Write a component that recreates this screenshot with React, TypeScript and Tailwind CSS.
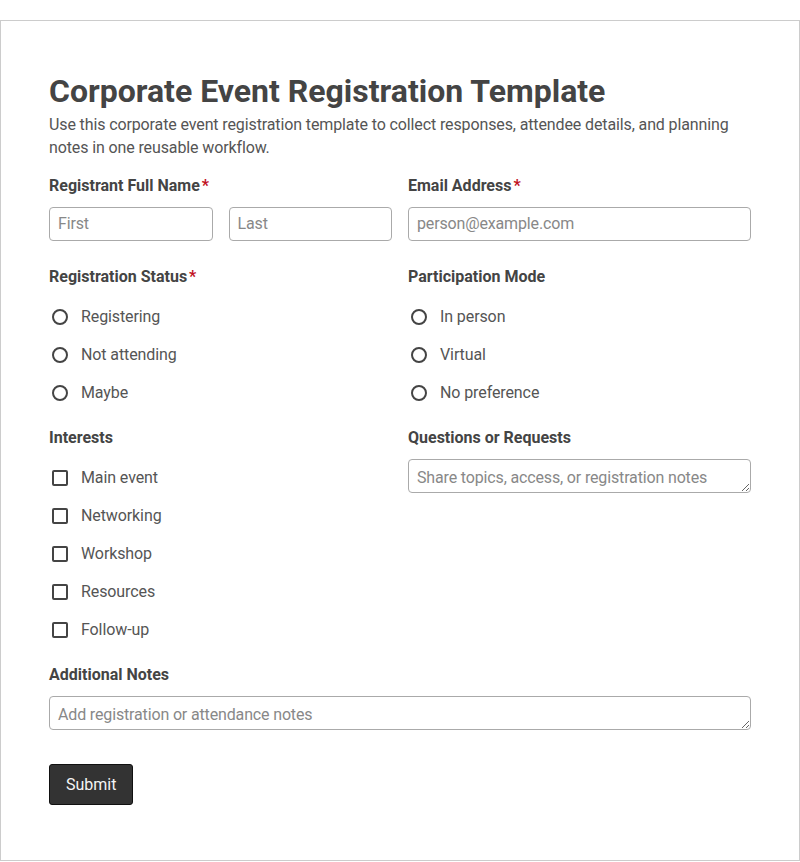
import React from "react";

const font = { fontFamily: "Roboto, 'Liberation Sans', sans-serif" };

function Label({ text, required }: { text: string; required?: boolean }) {
  return (
    <div className="h-6 text-[16px] leading-6 font-bold text-[#444]">
      {text}
      {required && <span className="ml-[2px] text-[#c1121f]">*</span>}
    </div>
  );
}

function Radio({ text }: { text: string }) {
  return (
    <label className="flex h-[38px] items-center">
      <span className="ml-[3px] h-4 w-4 shrink-0 rounded-full border-2 border-[#444]" />
      <span className="ml-[13px] text-[16px] tracking-[-0.1px] text-[#555]">{text}</span>
    </label>
  );
}

function Check({ text }: { text: string }) {
  return (
    <label className="flex h-[38px] items-center">
      <span className="ml-[3px] h-4 w-4 shrink-0 rounded-[2px] border-2 border-[#444]" />
      <span className="ml-[13px] text-[16px] tracking-[-0.1px] text-[#555]">{text}</span>
    </label>
  );
}

const inputCls =
  "block h-[34px] w-full rounded-[4px] border border-[#aaa] bg-white px-2 text-[16px] tracking-[-0.15px] text-[#444] placeholder:text-[#888] outline-none";

export default function App() {
  return (
    <div style={font} className="min-h-[862px] bg-white pt-[20px]">
      <div className="border border-[#ccc] px-12 pt-[51px] pb-[55px]">
        <h1 className="text-[32px] leading-[38px] font-bold text-[#444]">
          Corporate Event Registration Template
        </h1>
        <p className="mt-[3px] text-[16px] leading-[23px] tracking-[-0.12px] text-[#555]">
          Use this corporate event registration template to collect responses, attendee details, and planning
          notes in one reusable workflow.
        </p>

        <div className="mt-[15px] grid grid-cols-2 gap-x-4">
          <div>
            <Label text="Registrant Full Name" required />
            <div className="mt-[9px] grid grid-cols-2 gap-x-4">
              <input className={"pb-[2px] " + inputCls} placeholder="First" />
              <input className={"pb-[2px] " + inputCls} placeholder="Last" />
            </div>
          </div>
          <div>
            <Label text="Email Address" required />
            <input className={"mt-[9px] pb-[2px] " + inputCls} placeholder="person@example.com" />
          </div>
        </div>

        <div className="mt-[24px] grid grid-cols-2 gap-x-4">
          <div>
            <Label text="Registration Status" required />
            <div className="mt-[9px] flex flex-col">
              <Radio text="Registering" />
              <Radio text="Not attending" />
              <Radio text="Maybe" />
            </div>
          </div>
          <div>
            <Label text="Participation Mode" />
            <div className="mt-[9px] flex flex-col">
              <Radio text="In person" />
              <Radio text="Virtual" />
              <Radio text="No preference" />
            </div>
          </div>
        </div>

        <div className="mt-[14px] grid grid-cols-2 gap-x-4">
          <div>
            <Label text="Interests" />
            <div className="mt-[9px] flex flex-col">
              <Check text="Main event" />
              <Check text="Networking" />
              <Check text="Workshop" />
              <Check text="Resources" />
              <Check text="Follow-up" />
            </div>
          </div>
          <div>
            <Label text="Questions or Requests" />
            <textarea
              rows={1}
              className={"mt-[9px] pt-[8px] pb-[4px] leading-[20px] " + inputCls}
              placeholder="Share topics, access, or registration notes"
            />
          </div>
        </div>

        <div className="mt-[14px]">
          <Label text="Additional Notes" />
          <textarea
            rows={1}
            className={"mt-[9px] pt-[8px] pb-[4px] leading-[20px] " + inputCls}
            placeholder="Add registration or attendance notes"
          />
        </div>

        <button className="mt-[34px] h-[41px] rounded-[3px] border border-[#111] bg-[#333] px-4 text-[16px] text-[#f5f5f5]">
          Submit
        </button>
      </div>
    </div>
  );
}
